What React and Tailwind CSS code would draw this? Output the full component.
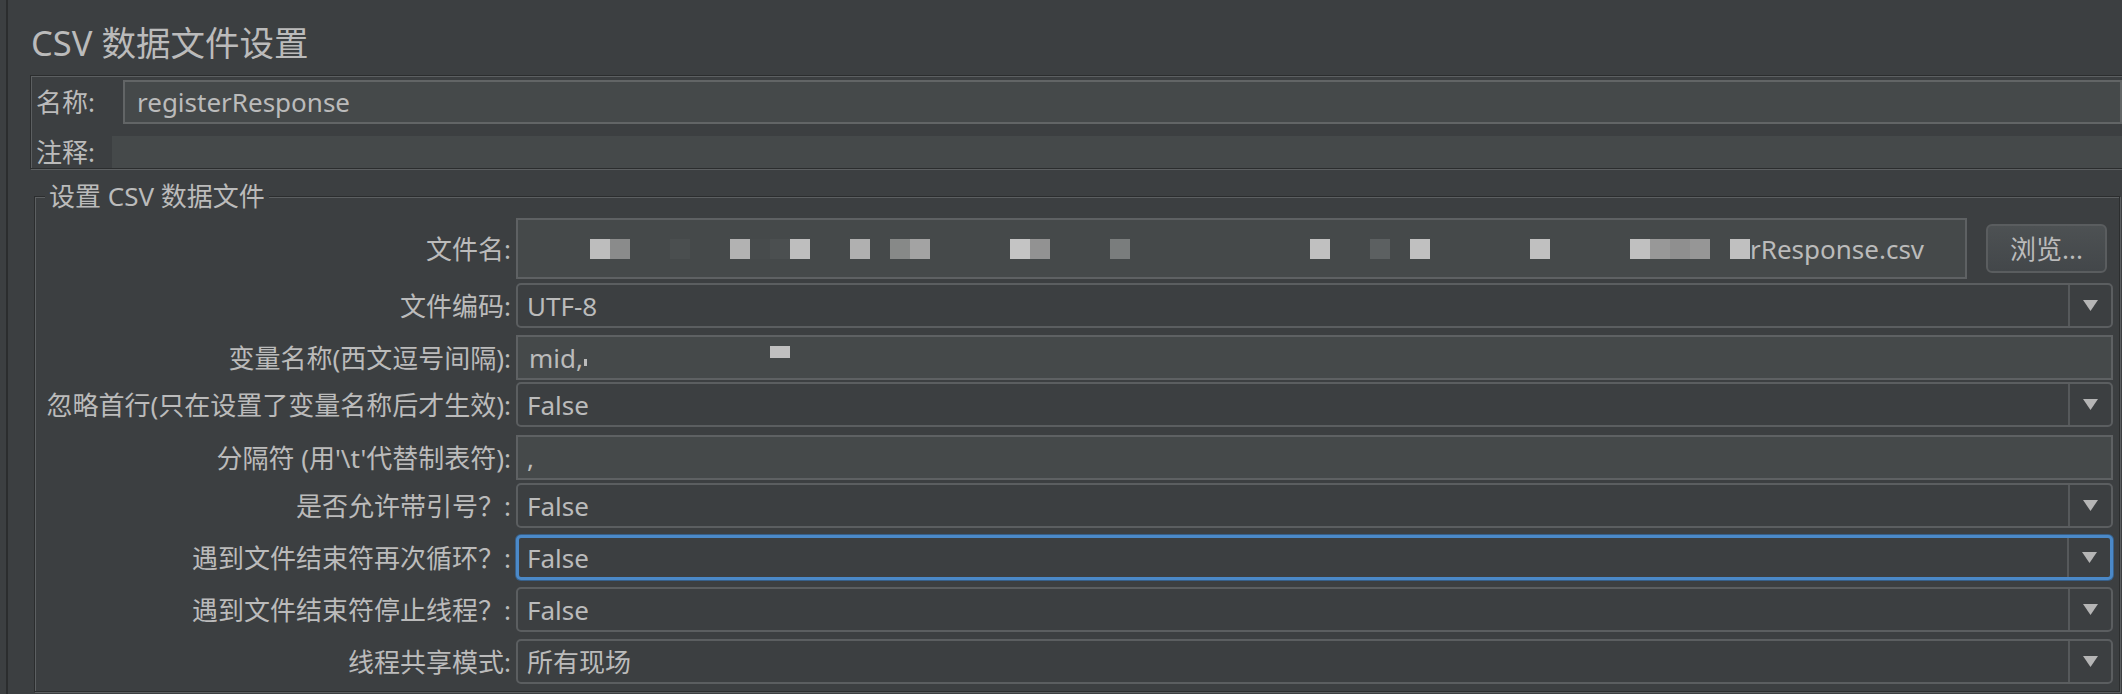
import React from "react";

// mosaic cells over the hidden file path, 20px grid starting at x=590
const pathCells = [
  "#bdbdbd", "#8a8b8b", null, null, "#4a4e4f", null, null, "#b2b2b2", "#474b4c", "#4b4f50",
  "#bebebe", null, null, "#b0b0b0", null, "#878988", "#a3a3a3", null, null, null,
  null, "#c4c4c4", "#929292", null, null, null, "#7a7d7d", null, null, null,
  null, null, null, null, null, null, "#c0c0c0", null, null, "#5c6061",
  null, "#c0c0c0", null, null, null, null, null, "#c0c0c0", null, null,
  null, null, "#c0c0c0", "#989898", "#8f8f8f", "#969696", null, "#c0c0c0",
];

const rows = [
  { label: "文件编码:", kind: "combo", value: "UTF-8", mt: "mt-[4px]" },
  { label: "变量名称(西文逗号间隔):", kind: "vars", mt: "mt-[7px]" },
  { label: "忽略首行(只在设置了变量名称后才生效):", kind: "combo", value: "False", mt: "mt-[2px]" },
  { label: "分隔符 (用'\\t'代替制表符):", kind: "text", value: ",", mt: "mt-[8px]" },
  { label: "是否允许带引号？:", kind: "combo", value: "False", mt: "mt-[3px]" },
  { label: "遇到文件结束符再次循环？:", kind: "combo", value: "False", mt: "mt-[7px]", focused: true },
  { label: "遇到文件结束符停止线程？:", kind: "combo", value: "False", mt: "mt-[7px]" },
  { label: "线程共享模式:", kind: "combo", value: "所有现场", mt: "mt-[7px]" },
];

const Arrow = () => (
  <svg width="15" height="11" viewBox="0 0 15 11">
    <polygon points="0,0 15,0 7.5,11" fill="#b5b5b5" />
  </svg>
);

const Combo = ({ value, focused }) => (
  <div
    className={
      focused
        ? "flex h-[45px] flex-1 rounded-[5px] border-[3px] border-[#4b89c8] bg-[#3c3f41] shadow-[0_0_0_1px_#37608a]"
        : "flex h-[45px] flex-1 rounded-[5px] border-2 border-[#5b5e60] bg-[#3c3f41]"
    }
  >
    <div className={focused ? "flex flex-1 items-center pl-[8px]" : "flex flex-1 items-center pl-[9px]"}>{value}</div>
    <div className="flex w-[43px] items-center justify-center border-l-2 border-[#56595b]">
      <Arrow />
    </div>
  </div>
);

const TextField = ({ children, className = "" }) => (
  <div className={"relative flex h-[45px] flex-1 items-center border-2 border-[#5e6163] bg-[#45494a] pl-[9px] " + className}>
    {children}
  </div>
);

const Row = ({ row }) => (
  <div className={"flex items-center pr-[6px] " + row.mt}>
    <div className="w-[476px] shrink-0 text-right whitespace-nowrap">{row.label}</div>
    <div className="ml-[5px] flex flex-1">
      {row.kind === "combo" && <Combo value={row.value} focused={row.focused} />}
      {row.kind === "text" && <TextField>{row.value}</TextField>}
      {row.kind === "vars" && (
        <TextField className="pl-[11px]">
          <span>mid,</span>
          <span className="ml-[1px] mt-[10px] h-[7px] w-[3px] bg-[#bbbbbb]" />
          {/* mosaic over the rest of the names */}
          <span className="absolute left-[252px] top-[9px] h-[12px] w-[20px] bg-[#c0c0c0]" />
        </TextField>
      )}
    </div>
  </div>
);

export default function App() {
  return (
    <div className="flex h-[694px] w-full overflow-hidden bg-[#3c3f41] font-['Noto_Sans','Noto_Sans_CJK_SC',sans-serif] text-[26px] leading-[30px] text-[#bbbbbb]">
      <div className="w-[6px] shrink-0" />
      <div className="flex min-w-0 flex-1 flex-col border-l-2 border-[#2b2d2e]">
        {/* title */}
        <h1 className="h-[75px] shrink-0 pl-[23px] pt-[23px] text-[34.5px] leading-[40px] font-normal">
          CSV 数据文件设置
        </h1>

        {/* name / comment panel */}
        <div className="-mr-[4px] ml-[22px] flex shrink-0 flex-col border border-[#2b2d2e] pl-[5px] pr-[3px] pt-[4px] shadow-[1px_1px_0_#5c5f61,inset_1px_1px_0_#5c5f61]">
          <div className="flex h-[44px] items-center">
            <div className="w-[87px] shrink-0">名称:</div>
            <div className="flex h-full flex-1 items-center border-2 border-[#626566] bg-[#45494a] pl-[12px]">
              registerResponse
            </div>
          </div>
          <div className="mt-[12px] flex h-[32px] items-center">
            <div className="w-[76px] shrink-0">注释:</div>
            <div className="-mr-[3px] h-full flex-1 bg-[#45494a]" />
          </div>
        </div>

        {/* CSV data set group */}
        <fieldset className="ml-[26px] mr-[2px] mt-[12px] min-w-0 border border-[#2b2d2e] shadow-[1px_1px_0_#5c5f61,inset_1px_1px_0_#5c5f61]">
          <legend className="ml-[10px] bg-[#3c3f41] px-[4px] leading-[30px]">设置 CSV 数据文件</legend>
          <div className="flex flex-col pb-[7px] pt-[7px]">
            {/* file name */}
            <div className="flex items-center">
              <div className="w-[476px] shrink-0 text-right">文件名:</div>
              <div className="ml-[5px] flex h-[61px] flex-1 items-center border-2 border-[#5e6163] bg-[#45494a] pl-[72px]">
                {pathCells.map((c, i) => (
                  <span
                    key={i}
                    className="h-[20px] w-[20px] shrink-0"
                    style={c ? { backgroundColor: c } : undefined}
                  />
                ))}
                <span className="whitespace-nowrap">rResponse.csv</span>
              </div>
              <button className="ml-[19px] mr-[12px] flex h-[49px] w-[121px] shrink-0 items-center justify-center rounded-[6px] border-2 border-[#5a5d5f] bg-gradient-to-b from-[#4d5153] to-[#43474a] text-[#bbbbbb]">
                浏览...
              </button>
            </div>
            {rows.map((r, i) => (
              <Row key={i} row={r} />
            ))}
          </div>
        </fieldset>
      </div>
    </div>
  );
}
